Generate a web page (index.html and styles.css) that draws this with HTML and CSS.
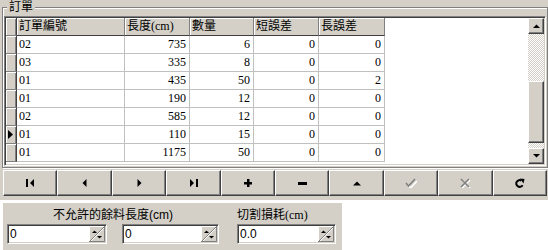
FILE: index.html
```html
<!DOCTYPE html>
<html lang="zh-Hant">
<head>
    <meta charset="UTF-8">
    <title>訂單</title>
    <link rel="stylesheet" href="styles.css">
</head>
<body>
    <div class="top">
        <div class="group">
            <span class="legend">訂單</span>
            <div class="grid">
                <div class="grid-body">
                    <div class="row head">
                        <div class="cell ind"></div>
                        <div class="cell">訂單編號</div>
                        <div class="cell">長度(cm)</div>
                        <div class="cell">數量</div>
                        <div class="cell">短誤差</div>
                        <div class="cell">長誤差</div>
                    </div>
                    <div class="row">
                        <div class="cell ind"></div>
                        <div class="cell">02</div>
                        <div class="cell num">735</div>
                        <div class="cell num">6</div>
                        <div class="cell num">0</div>
                        <div class="cell num">0</div>
                    </div>
                    <div class="row">
                        <div class="cell ind"></div>
                        <div class="cell">03</div>
                        <div class="cell num">335</div>
                        <div class="cell num">8</div>
                        <div class="cell num">0</div>
                        <div class="cell num">0</div>
                    </div>
                    <div class="row">
                        <div class="cell ind"></div>
                        <div class="cell">01</div>
                        <div class="cell num">435</div>
                        <div class="cell num">50</div>
                        <div class="cell num">0</div>
                        <div class="cell num">2</div>
                    </div>
                    <div class="row">
                        <div class="cell ind"></div>
                        <div class="cell">01</div>
                        <div class="cell num">190</div>
                        <div class="cell num">12</div>
                        <div class="cell num">0</div>
                        <div class="cell num">0</div>
                    </div>
                    <div class="row">
                        <div class="cell ind"></div>
                        <div class="cell">02</div>
                        <div class="cell num">585</div>
                        <div class="cell num">12</div>
                        <div class="cell num">0</div>
                        <div class="cell num">0</div>
                    </div>
                    <div class="row">
                        <div class="cell ind current">
                            <svg width="5" height="9" viewBox="0 0 5 9"><polygon points="0,0 5,4.5 0,9" fill="#000"/></svg>
                        </div>
                        <div class="cell">01</div>
                        <div class="cell num">110</div>
                        <div class="cell num">15</div>
                        <div class="cell num">0</div>
                        <div class="cell num">0</div>
                    </div>
                    <div class="row">
                        <div class="cell ind"></div>
                        <div class="cell">01</div>
                        <div class="cell num">1175</div>
                        <div class="cell num">50</div>
                        <div class="cell num">0</div>
                        <div class="cell num">0</div>
                    </div>
                </div>
                <div class="vscroll">
                    <div class="sb-btn raised">
                        <svg width="7" height="4" viewBox="0 0 7 4"><polygon points="0,4 7,4 3.5,0.5" fill="#000"/></svg>
                    </div>
                    <div class="sb-track">
                        <div class="sb-thumb raised"></div>
                    </div>
                    <div class="sb-btn raised">
                        <svg width="7" height="4" viewBox="0 0 7 4"><polygon points="0,0 7,0 3.5,3.5" fill="#000"/></svg>
                    </div>
                </div>
            </div>
        </div>

        <div class="nav">
            <div class="nav-btn raised">
                <svg width="9" height="8" viewBox="0 0 9 8"><rect x="0" y="0" width="2" height="8"/><polygon points="8,0 8,8 4,4"/></svg>
            </div>
            <div class="nav-btn raised">
                <svg width="5" height="8" viewBox="0 0 5 8"><polygon points="4.5,0 4.5,8 0.5,4"/></svg>
            </div>
            <div class="nav-btn raised">
                <svg width="5" height="8" viewBox="0 0 5 8"><polygon points="0.5,0 0.5,8 4.5,4"/></svg>
            </div>
            <div class="nav-btn raised">
                <svg width="9" height="8" viewBox="0 0 9 8"><polygon points="1,0 1,8 5,4"/><rect x="7" y="0" width="2" height="8"/></svg>
            </div>
            <div class="nav-btn raised">
                <svg width="8" height="8" viewBox="0 0 8 8"><rect x="3" y="0" width="2.5" height="8"/><rect x="0" y="3" width="8" height="2.5"/></svg>
            </div>
            <div class="nav-btn raised">
                <svg width="9" height="3" viewBox="0 0 9 3"><rect x="0" y="0" width="9" height="3"/></svg>
            </div>
            <div class="nav-btn raised">
                <svg width="8" height="5" viewBox="0 0 8 5"><polygon points="0,4.5 8,4.5 4,0.5"/></svg>
            </div>
            <div class="nav-btn raised">
                <svg width="12" height="10" viewBox="0 0 12 10" class="disabled">
                    <polyline points="2,6 4.5,9 11,2" stroke="#fff" transform="translate(1 1)"/>
                    <polyline points="1,5 3.5,8 10,1" stroke="#808080"/>
                </svg>
            </div>
            <div class="nav-btn raised">
                <svg width="11" height="10" viewBox="0 0 11 10" class="disabled">
                    <path d="M1 1 L9 9 M9 1 L1 9" stroke="#fff" transform="translate(1 1)"/>
                    <path d="M1 1 L9 9 M9 1 L1 9" stroke="#808080"/>
                </svg>
            </div>
            <div class="nav-btn raised">
                <svg width="10" height="10" viewBox="0 0 10 10">
                    <path d="M6.5 2.6 A3.4 3.4 0 1 0 7.6 7.2" fill="none" stroke="#000" stroke-width="2"/>
                    <polygon points="5,0.5 9.5,1 8.5,5.5"/>
                </svg>
            </div>
        </div>
    </div>

    <div class="params">
        <div class="field field-wide">
            <div class="label label-sans">不允許的餘料長度(cm)</div>
            <div class="edits">
                <div class="edit w100">
                    <span class="edit-text">0</span>
                    <svg class="spin" width="16" height="16" viewBox="0 0 16 16">
                        <rect width="16" height="16" fill="#d4d0c8"/>
                        <path d="M0.5 16 V0.5 H16" stroke="#fff" fill="none"/>
                        <path d="M0 15.5 H15.5 V0" stroke="#808080" fill="none"/>
                        <path d="M1 15 L15 1" stroke="#808080"/>
                        <path d="M2 15 L15 2" stroke="#fff"/>
                        <polygon points="3,7 8,7 5.5,4.5"/>
                        <polygon points="8,10 13,10 10.5,12.5"/>
                    </svg>
                </div>
                <div class="edit w97">
                    <span class="edit-text">0</span>
                    <svg class="spin" width="16" height="16" viewBox="0 0 16 16">
                        <rect width="16" height="16" fill="#d4d0c8"/>
                        <path d="M0.5 16 V0.5 H16" stroke="#fff" fill="none"/>
                        <path d="M0 15.5 H15.5 V0" stroke="#808080" fill="none"/>
                        <path d="M1 15 L15 1" stroke="#808080"/>
                        <path d="M2 15 L15 2" stroke="#fff"/>
                        <polygon points="3,7 8,7 5.5,4.5"/>
                        <polygon points="8,10 13,10 10.5,12.5"/>
                    </svg>
                </div>
            </div>
        </div>
        <div class="field">
            <div class="label">切割損耗(cm)</div>
            <div class="edits">
                <div class="edit w99">
                    <span class="edit-text">0.0</span>
                    <svg class="spin" width="16" height="16" viewBox="0 0 16 16">
                        <rect width="16" height="16" fill="#d4d0c8"/>
                        <path d="M0.5 16 V0.5 H16" stroke="#fff" fill="none"/>
                        <path d="M0 15.5 H15.5 V0" stroke="#808080" fill="none"/>
                        <path d="M1 15 L15 1" stroke="#808080"/>
                        <path d="M2 15 L15 2" stroke="#fff"/>
                        <polygon points="3,7 8,7 5.5,4.5"/>
                        <polygon points="8,10 13,10 10.5,12.5"/>
                    </svg>
                </div>
            </div>
        </div>
    </div>
</body>
</html>
```

FILE: styles.css
```css
* {
    box-sizing: border-box;
}

body {
    margin: 0;
    background-color: #fff;
    color: #000;
    font-family: "Liberation Serif", "Noto Sans CJK TC", serif;
    font-size: 12px;
    line-height: 16px;
}

svg {
    display: block;
}

/* shared 3d button look */
.raised {
    background-color: #d4d0c8;
    border: 1px solid;
    border-color: #fff #404040 #404040 #fff;
    box-shadow: inset -1px -1px 0 #808080;
}

.top {
    height: 200px;
    padding-top: 7px;
    background-color: #d4d0c8;
}

.group {
    position: relative;
    width: 546px;
    height: 161px;
    margin-left: 2px;
    padding: 8px 0 0 1px;
    border: 1px solid #808080;
    box-shadow: inset 1px 1px 0 #fff, 1px 1px 0 #fff;
}

.legend {
    position: absolute;
    left: 4px;
    top: -8px;
    padding: 0 2px;
    line-height: 14px;
    background-color: #d4d0c8;
}

.grid {
    display: flex;
    width: 542px;
    height: 150px;
    padding: 1px;
    border: 1px solid;
    border-color: #808080 #fff #fff #808080;
    box-shadow: inset 1px 1px 0 #404040, inset -1px -1px 0 #d4d0c8;
    background-color: #fff;
}

.grid-body {
    flex: 1;
}

.row {
    display: grid;
    grid-template-columns: 11px 108px 65px 64px 65px 66px;
    height: 18px;
}

.cell {
    padding: 0 3px 0 2px;
    border-right: 1px solid #c0c0c0;
    border-bottom: 1px solid #c0c0c0;
    line-height: 17px;
    white-space: nowrap;
    overflow: hidden;
}

.num {
    text-align: right;
}

.head .cell {
    background-color: #d4d0c8;
    border-right-color: #808080;
    border-bottom-color: #404040;
    box-shadow: inset 1px 1px 0 #fff;
}

.cell.ind,
.head .cell.ind {
    padding: 0;
    background-color: #d4d0c8;
    border-right-color: #404040;
    border-bottom-color: #808080;
    box-shadow: inset 1px 1px 0 #fff, inset -1px 0 0 #808080;
}

.current {
    display: flex;
    align-items: center;
    padding-left: 2px !important;
}

.vscroll {
    display: flex;
    flex-direction: column;
    width: 16px;
    background: repeating-conic-gradient(#d4d0c8 0 25%, #fff 0 50%) 0 0 / 2px 2px;
}

.sb-btn {
    display: flex;
    align-items: center;
    justify-content: center;
    height: 16px;
}

.sb-track {
    flex: 1;
    padding-top: 47px;
}

.sb-thumb {
    height: 62px;
}

.nav {
    display: flex;
    width: 544px;
    height: 26px;
    margin: 2px 0 0 3px;
}

.nav-btn {
    flex: 1;
    display: flex;
    align-items: center;
    justify-content: center;
}

.nav-btn svg {
    fill: #000;
}

.disabled polyline,
.disabled path {
    fill: none;
    stroke-width: 1.6;
}

.params {
    display: flex;
    gap: 18px;
    width: 339px;
    height: 47px;
    margin: 3px 0 0 3px;
    padding: 4px 0 0 4px;
    background-color: #d4d0c8;
}

.field-wide {
    width: 212px;
}

.field-wide .label {
    text-align: center;
}

.label-sans {
    font-family: "Liberation Sans", "Noto Sans CJK TC", sans-serif;
}

.edits {
    display: flex;
    gap: 15px;
    margin-top: 1px;
}

.edit {
    display: flex;
    height: 20px;
    padding: 1px;
    border: 1px solid;
    border-color: #808080 #fff #fff #808080;
    box-shadow: inset 1px 1px 0 #404040, inset -1px -1px 0 #d4d0c8;
    background-color: #fff;
}

.w100 { width: 100px; }
.w97 { width: 97px; }
.w99 { width: 99px; }

.edit-text {
    flex: 1;
    padding-left: 1px;
    font-family: "Liberation Sans", sans-serif;
    font-size: 12px;
    line-height: 16px;
}

.spin {
    flex: none;
}
```
